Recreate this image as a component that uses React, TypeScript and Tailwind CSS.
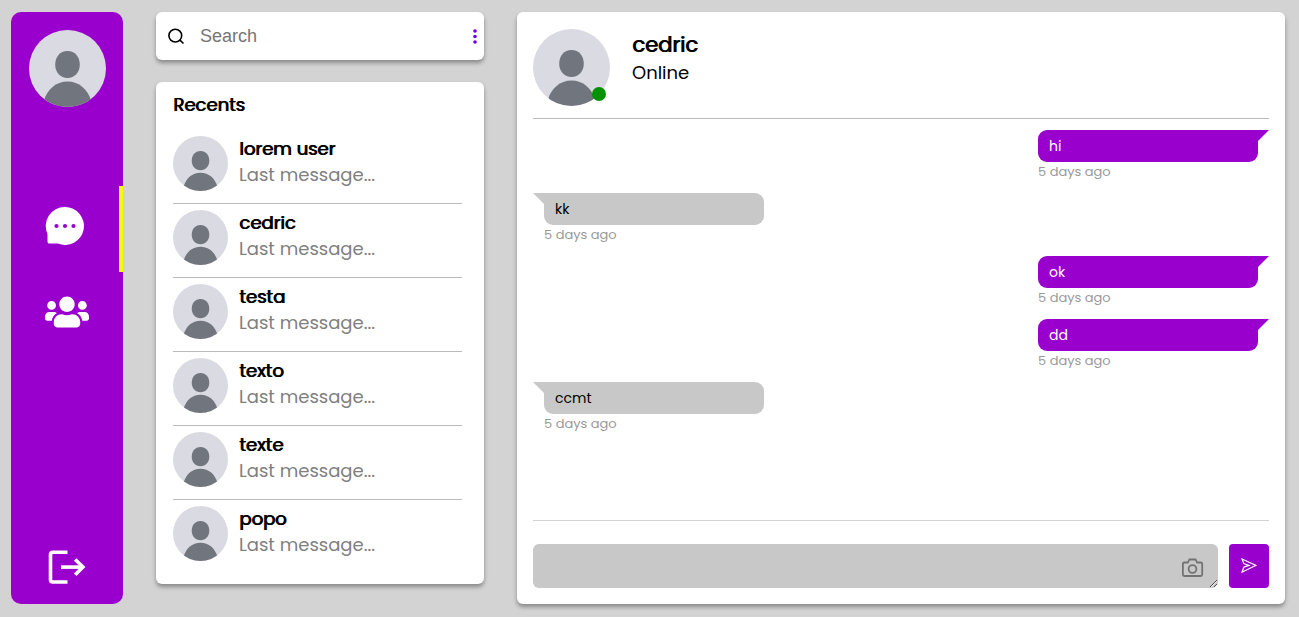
import { FaUsers } from "react-icons/fa";

type Message = { id: number; text: string; mine: boolean };

const contacts = ["lorem user", "cedric", "testa", "texto", "texte", "popo"];

const messages: Message[] = [
  { id: 1, text: "hi", mine: true },
  { id: 2, text: "kk", mine: false },
  { id: 3, text: "ok", mine: true },
  { id: 4, text: "dd", mine: true },
  { id: 5, text: "ccmt", mine: false },
];

const cardClass = "rounded-md bg-white shadow-[0_3px_4px_rgba(0,0,0,0.35)]";
const strongClass = "font-normal [text-shadow:1px_0_0_currentColor]";

function Avatar({ className }: { className: string }) {
  return (
    <svg viewBox="0 0 77 77" className={`shrink-0 rounded-full ${className}`} role="img" aria-label="Avatar">
      <rect width="77" height="77" fill="#dadae2" />
      <path
        d="M38.5 21c7.6 0 12.3 6 12.3 13.8S45.6 48 38.5 48s-12.3-5.4-12.3-13.2S30.9 21 38.5 21z"
        fill="#71757e"
      />
      <path d="M15 70.5C18 59.5 27 51.500 38.500 51.500S59 59.500 62 70.500L58 77H19z" fill="#71757e" />
    </svg>
  );
}

function ChatIcon() {
  return (
    <svg viewBox="0 0 40 40" className="h-10 w-10" aria-hidden="true">
      <path d="M20 1a19 19 0 1 1-7.200 36.600H4.500A2 2 0 0 1 2.500 35.500V28A19 19 0 0 1 20 1z" fill="#fff" />
      <g fill="#9a00cd">
        <circle cx="11.500" cy="20" r="2.100" />
        <circle cx="20" cy="20" r="2.100" />
        <circle cx="28.500" cy="20" r="2.100" />
      </g>
    </svg>
  );
}

function LogoutIcon() {
  return (
    <svg viewBox="0 0 38 34" className="h-[34px] w-[38px]" fill="none" stroke="#fff" strokeWidth="3.6" aria-hidden="true">
      <path d="M19.500 2.300H4.800Q2.500 2.300 2.500 4.500V29.700Q2.500 32 4.800 32H19.500" />
      <path d="M13 17.100H35" />
      <path d="M27.200 9.400L34.900 17.100L27.200 24.800" />
    </svg>
  );
}

function SearchIcon() {
  return (
    <svg viewBox="0 0 18 18" className="h-[18px] w-[18px] shrink-0" fill="none" stroke="#000" strokeWidth="1.6" aria-hidden="true">
      <circle cx="7.300" cy="8.600" r="6.400" />
      <path d="M11.900 13.200L15.500 16.500" />
    </svg>
  );
}

function CameraIcon() {
  return (
    <svg viewBox="0 0 22 20" className="h-5 w-[22px]" fill="none" stroke="#737373" strokeWidth="1.8" strokeLinejoin="round" aria-hidden="true">
      <path d="M2.300 4.500H6L7.300 1.500H13.700L15 4.500H18.700Q20.200 4.500 20.200 6V16.500Q20.200 18 18.700 18H2.300Q.9 18 .9 16.500V6Q.9 4.500 2.300 4.500z" />
      <circle cx="10.500" cy="11" r="3.900" />
    </svg>
  );
}

function SendIcon() {
  return (
    <svg viewBox="0 0 16 16" className="h-4 w-4" fill="none" stroke="#fff" strokeWidth="1.2" aria-hidden="true">
      <path d="M1 1L15 7.400L1 14.200L2.800 9.300L8 7.400L2.800 5.600z" />
    </svg>
  );
}

function Sidebar() {
  return (
    <nav className="flex w-28 shrink-0 flex-col items-center rounded-[10px] bg-[#9a00cd] pt-[18px] pb-5">
      <Avatar className="h-[77px] w-[77px]" />
      <div className="mt-[79px] w-full">
        <button type="button" aria-label="Chats" className="flex h-[86px] w-full items-center justify-center border-r-4 border-[#f2ff00] pb-1.5">
          <ChatIcon />
        </button>
        <button type="button" aria-label="Groups" className="flex h-20 w-full items-center justify-center text-white">
          <FaUsers size={44} />
        </button>
      </div>
      <button type="button" aria-label="Log out" className="mt-auto">
        <LogoutIcon />
      </button>
    </nav>
  );
}

function Contacts() {
  return (
    <div className="ml-[33px] flex w-[328px] shrink-0 flex-col">
      <div className={`flex h-12 items-center pr-1.5 pl-3 ${cardClass}`}>
        <SearchIcon />
        <input
          type="text"
          aria-label="Search"
          placeholder="Search"
          className="ml-3.5 min-w-0 flex-1 font-['Liberation_Sans',sans-serif] text-lg outline-none placeholder:text-[#757575]"
        />
        <button type="button" aria-label="More options">
          <svg viewBox="0 0 6 16" className="h-4 w-1.5" fill="#6a00f4" aria-hidden="true">
            <circle cx="3" cy="3" r="1.800" />
            <circle cx="3" cy="8.500" r="1.800" />
            <circle cx="3" cy="14" r="1.800" />
          </svg>
        </button>
      </div>
      <section className={`mt-[22px] mb-5 flex-1 pt-[11px] pr-[22px] pl-[17px] ${cardClass}`}>
        <h2 className={`text-lg leading-6 ${strongClass}`}>Recents</h2>
        <ul className="mt-[13px]">
          {contacts.map((name) => (
            <li key={name} className="flex h-[74px] gap-[11px] border-b border-[#bbb] pt-1.5 last:border-b-0">
              <Avatar className="h-[55px] w-[55px]" />
              <div>
                <p className={`text-lg leading-[26px] ${strongClass}`}>{name}</p>
                <p className="text-lg leading-[26px] text-[#808080]">Last message...</p>
              </div>
            </li>
          ))}
        </ul>
      </section>
    </div>
  );
}

function Bubble({ text, mine }: { text: string; mine: boolean }) {
  return (
    <li className={`mb-3 w-[220px] ${mine ? "mr-[11px] self-end" : "ml-[11px] self-start"}`}>
      <p
        className={`relative h-8 rounded-[9px] px-[11px] text-sm leading-8 ${
          mine ? "rounded-tr-none bg-[#9a00cd] text-white" : "rounded-tl-none bg-[#c8c8c8] text-black"
        }`}
      >
        {text}
        <svg
          viewBox="0 0 11 11"
          className={`absolute top-0 h-[11px] w-[11px] ${mine ? "left-full" : "right-full"}`}
          aria-hidden="true"
        >
          {mine ? <path d="M0 0H11L0 11z" fill="#9a00cd" /> : <path d="M0 0H11V11z" fill="#c8c8c8" />}
        </svg>
      </p>
      <p className="text-[13px] leading-[19px] text-[#999]">5 days ago</p>
    </li>
  );
}

function Conversation() {
  return (
    <main className={`ml-[33px] flex min-w-0 flex-1 flex-col px-4 pt-[17px] pb-4 ${cardClass}`}>
      <header className="flex gap-[22px] border-b border-[#bbb] pb-3">
        <div className="relative">
          <Avatar className="h-[77px] w-[77px]" />
          <span className="absolute right-1 bottom-[5px] h-3.5 w-3.5 rounded-full bg-[#009200]" />
        </div>
        <div className="pt-0.5">
          <h1 className={`text-[21px] leading-7 ${strongClass}`}>cedric</h1>
          <p className="text-lg leading-7">Online</p>
        </div>
      </header>
      <ul className="flex min-h-0 flex-1 flex-col overflow-y-auto pt-[11px]">
        {messages.map((m) => (
          <Bubble key={m.id} text={m.text} mine={m.mine} />
        ))}
      </ul>
      <form className="flex gap-[11px] border-t border-[#d3d3d3] pt-[23px]" onSubmit={(e) => e.preventDefault()}>
        <div className="relative flex flex-1">
          <textarea aria-label="Message" className="h-11 w-full resize rounded-md bg-[#c8c8c8] py-2 pr-12 pl-3 text-sm outline-none" />
          <button type="button" aria-label="Attach photo" className="absolute right-3.5 bottom-[10px]">
            <CameraIcon />
          </button>
        </div>
        <button type="submit" aria-label="Send" className="flex h-11 w-10 items-center justify-center rounded bg-[#9a00cd]">
          <SendIcon />
        </button>
      </form>
    </main>
  );
}

export default function App() {
  return (
    <div className="flex h-screen min-h-[617px] bg-[#d3d3d3] pt-3 pr-3.5 pb-[13px] pl-[11px] font-['Poppins','Inter',sans-serif] text-black">
      <Sidebar />
      <Contacts />
      <Conversation />
    </div>
  );
}
